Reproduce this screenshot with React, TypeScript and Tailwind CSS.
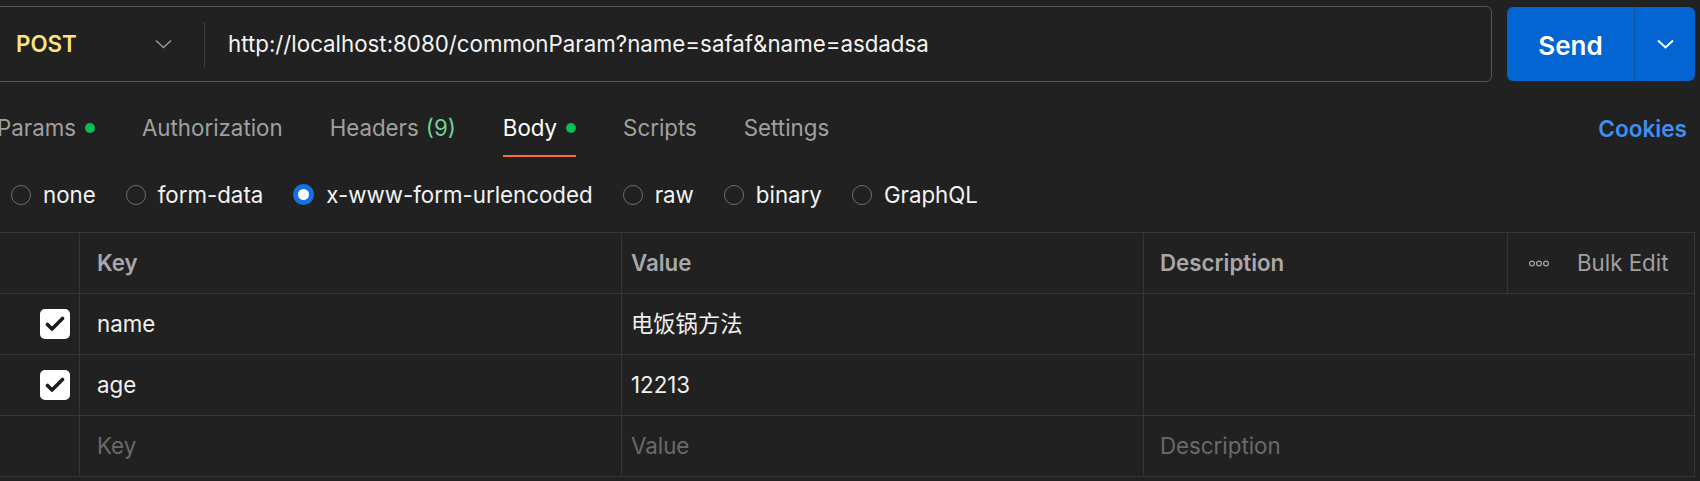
const tabs = [
  { label: "Params", dot: true },
  { label: "Authorization" },
  { label: "Headers", count: "(9)" },
  { label: "Body", dot: true, active: true },
  { label: "Scripts" },
  { label: "Settings" },
];

const bodyTypes = ["none", "form-data", "x-www-form-urlencoded", "raw", "binary", "GraphQL"];

const rows = [
  { key: "name", value: "电饭锅方法" },
  { key: "age", value: "12213" },
];

function Chevron({ className, width = 1.5 }: { className?: string; width?: number }) {
  return (
    <svg className={className} width="17" height="10" viewBox="0 0 17 10" fill="none" stroke="currentColor" strokeWidth={width}>
      <polyline points="1,1.5 8.5,8.5 16,1.5" strokeLinejoin="miter" />
    </svg>
  );
}

function Checkbox() {
  return (
    <div className="flex h-[30px] w-[30px] items-center justify-center rounded-[5px] bg-white">
      <svg width="20" height="16" viewBox="0 0 20 16" fill="none" stroke="#1c1c1c" strokeWidth="3.6" strokeLinecap="round" strokeLinejoin="round">
        <polyline points="2.5,8.5 7,13 17.5,2.5" />
      </svg>
    </div>
  );
}

export default function App() {
  return (
    <div className="h-[481px] w-[1700px] overflow-hidden bg-[#212121] font-['Inter','Noto_Sans_CJK_SC',sans-serif] text-[22.3px] text-[#f0f0f0]">
      {/* request bar */}
      <div className="flex pt-[6px] pr-[5px]">
        <div className="-ml-[8px] flex h-[76px] flex-1 items-center rounded-[6px] border border-[#555555]">
          <div className="flex w-[211px] items-center justify-between pl-[23px] pr-[32px]">
            <span className="font-semibold text-[#ffe47e]">POST</span>
            <Chevron className="text-[#9a9a9a]" />
          </div>
          <div className="h-[45px] w-px bg-[#3f3f3f]" />
          <span className="pl-[23px] text-[#f3f3f3]">http://localhost:8080/commonParam?name=safaf&amp;name=asdadsa</span>
        </div>
        <div className="ml-[15px] mt-px flex h-[74px] w-[188px] overflow-hidden rounded-[6px] bg-[#0265d2]">
          <div className="flex w-[127px] items-center justify-center pt-[3px] text-[26px] font-semibold text-white">Send</div>
          <div className="w-px bg-[#1553a0]" />
          <div className="flex flex-1 items-center justify-center">
            <Chevron className="text-white" width={2} />
          </div>
        </div>
      </div>

      {/* tabs */}
      <div className="mt-[18px] flex items-stretch pr-[13px]">
        <div className="-ml-[3px] flex gap-[47px]">
          {tabs.map((t) => (
            <div
              key={t.label}
              className={`flex h-[57px] items-center border-b-2 ${t.active ? "border-[#ff6c37] text-white" : "border-transparent text-[#a0a0a0]"}`}
            >
              <span>{t.label}</span>
              {t.count && <span className="ml-[7px] text-[#6bd394]">{t.count}</span>}
              {t.dot && <span className="ml-[9px] h-[10px] w-[10px] rounded-full bg-[#0cbb52]" />}
            </div>
          ))}
        </div>
        <div className="ml-auto flex h-[57px] items-center text-[22.6px] font-semibold text-[#3f8ff0]">Cookies</div>
      </div>

      {/* body types */}
      <div className="flex h-[75px] items-center gap-[30px] pl-[11px]">
        {bodyTypes.map((b) => (
          <label key={b} className="flex items-center gap-[12px]">
            {b === "x-www-form-urlencoded" ? (
              <span className="h-[21px] w-[21px] rounded-full border-[5px] border-[#1373e6] bg-white" />
            ) : (
              <span className="h-[20px] w-[20px] rounded-full border-[1.5px] border-[#6e6e6e]" />
            )}
            <span className="text-[#f3f3f3]">{b}</span>
          </label>
        ))}
      </div>

      {/* table */}
      <div className="w-[1695px] border-t border-r border-[#353535]">
        <div className="flex h-[61px] border-b border-[#353535] font-semibold text-[#a8a8a8]">
          <div className="w-[80px] border-r border-[#353535]" />
          <div className="flex w-[542px] items-center border-r border-[#353535] pl-[17px]">Key</div>
          <div className="flex w-[522px] items-center border-r border-[#353535] pl-[9px]">Value</div>
          <div className="flex w-[364px] items-center border-r border-[#353535] pl-[16px]">Description</div>
          <div className="flex flex-1 items-center pl-[21px] font-normal text-[#a0a0a0]">
            <svg width="20" height="7" viewBox="0 0 20 7" fill="none" stroke="#a0a0a0" strokeWidth="1.3">
              <circle cx="3" cy="3.5" r="2.4" />
              <circle cx="10" cy="3.5" r="2.4" />
              <circle cx="17" cy="3.5" r="2.4" />
            </svg>
            <span className="ml-[28px]">Bulk Edit</span>
          </div>
        </div>
        {rows.map((r) => (
          <div key={r.key} className="flex h-[61px] border-b border-[#353535]">
            <div className="flex w-[80px] items-center justify-end border-r border-[#353535] pr-[9px]">
              <Checkbox />
            </div>
            <div className="flex w-[542px] items-center border-r border-[#353535] pl-[17px]">{r.key}</div>
            <div className="flex w-[522px] items-center border-r border-[#353535] pl-[9px]">{r.value}</div>
            <div className="flex-1" />
          </div>
        ))}
        <div className="flex h-[61px] border-b border-[#353535] text-[#6a6a6a]">
          <div className="w-[80px] border-r border-[#353535]" />
          <div className="flex w-[542px] items-center border-r border-[#353535] pl-[17px]">Key</div>
          <div className="flex w-[522px] items-center border-r border-[#353535] pl-[9px]">Value</div>
          <div className="flex flex-1 items-center pl-[16px]">Description</div>
        </div>
      </div>
    </div>
  );
}
